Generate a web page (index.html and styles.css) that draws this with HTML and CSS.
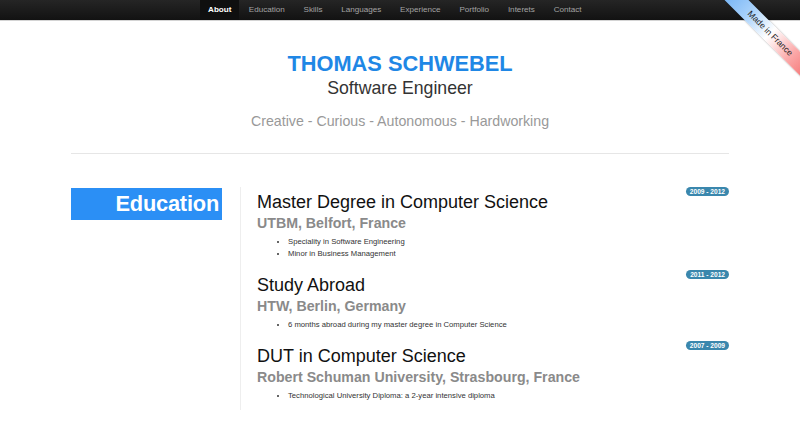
FILE: index.html
```html
<!DOCTYPE html>
<html lang="en">
<head>
<meta charset="utf-8">
<title>Thomas Schwebel</title>
<link rel="stylesheet" href="styles.css">
</head>
<body>
<nav class="navbar">
  <ul class="nav">
    <li class="active"><a href="#">About</a></li>
    <li><a href="#">Education</a></li>
    <li><a href="#">Skills</a></li>
    <li><a href="#">Languages</a></li>
    <li><a href="#">Experience</a></li>
    <li><a href="#">Portfolio</a></li>
    <li><a href="#">Interets</a></li>
    <li><a href="#">Contact</a></li>
  </ul>
</nav>
<div class="ribbon-wrap"><div class="ribbon">Made in France</div></div>

<header class="hero">
  <h1 class="name">THOMAS SCHWEBEL</h1>
  <h2 class="job">Software Engineer</h2>
  <p class="tagline">Creative - Curious - Autonomous - Hardworking</p>
</header>

<div class="container">
  <hr class="sep">
  <section class="section">
    <div class="section-label"><h2>Education</h2></div>
    <div class="section-body">
      <div class="entry">
        <span class="badge">2009 - 2012</span>
        <h3>Master Degree in Computer Science</h3>
        <h4>UTBM, Belfort, France</h4>
        <ul>
          <li>Speciality in Software Engineering</li>
          <li>Minor in Business Management</li>
        </ul>
      </div>
      <div class="entry">
        <span class="badge">2011 - 2012</span>
        <h3>Study Abroad</h3>
        <h4>HTW, Berlin, Germany</h4>
        <ul>
          <li>6 months abroad during my master degree in Computer Science</li>
        </ul>
      </div>
      <div class="entry">
        <span class="badge">2007 - 2009</span>
        <h3>DUT in Computer Science</h3>
        <h4>Robert Schuman University, Strasbourg, France</h4>
        <ul>
          <li>Technological University Diploma: a 2-year intensive diploma</li>
        </ul>
      </div>
    </div>
  </section>
</div>
</body>
</html>
```

FILE: styles.css
```css
* { box-sizing: border-box; }
html, body { margin: 0; padding: 0; }
body {
  font-family: "Liberation Sans", Arial, Helvetica, sans-serif;
  background: #fff;
  color: #333;
  overflow: hidden;
}

.navbar {
  height: 21px;
  background: linear-gradient(#252525, #121212);
  border-bottom: 1px solid #d4d4d4;
  display: flex;
  justify-content: center;
}
.nav {
  list-style: none;
  margin: 0;
  padding: 0 9px 0 0;
  display: flex;
  height: 20px;
}
.nav li { display: flex; }
.nav a {
  display: block;
  padding: 0 9.4px;
  line-height: 20px;
  font-size: 8.1px;
  color: #a3a3a3;
  text-decoration: none;
}
.nav li.active a {
  background: #0f0f0f;
  color: #fff;
  font-weight: bold;
  padding: 0 8px 0 8px;
}

.ribbon-wrap {
  position: absolute;
  top: 0;
  right: 0;
  width: 110px;
  height: 110px;
  overflow: hidden;
  z-index: 5;
}
.ribbon {
  position: absolute;
  left: 5px;
  top: 24.5px;
  width: 150px;
  height: 17px;
  line-height: 17px;
  transform: rotate(45deg);
  background: linear-gradient(90deg, #5aa4f2 0%, #a6d0fa 30%, #ffffff 50%, #fbaaaa 70%, #f04c4c 100%);
  color: #1a1a1a;
  font-size: 8.6px;
  text-align: center;
  box-shadow: 0 0 2px rgba(0,0,0,0.35);
}

.hero {
  text-align: center;
  padding-top: 30px;
}
.name {
  margin: 0;
  font-size: 21.8px;
  line-height: 26px;
  font-weight: bold;
  color: #1f87e5;
}
.job {
  margin: 0;
  font-size: 17.7px;
  line-height: 22px;
  font-weight: normal;
  color: #333;
}
.tagline {
  margin: 12px 0 0;
  font-size: 14.2px;
  line-height: 20px;
  color: #999;
}

.container {
  width: 658px;
  margin: 0 auto;
}
.sep {
  margin: 22px 0 0;
  border: 0;
  border-top: 1px solid #e6e6e6;
  height: 0;
}
.section {
  display: flex;
  margin-top: 33px;
}
.section-label {
  width: 169px;
  flex: none;
}
.section-label h2 {
  margin: 1px 0 0;
  width: 151px;
  height: 32px;
  background: #2b8ff5;
  color: #fff;
  font-size: 21.8px;
  font-weight: bold;
  text-align: right;
  line-height: 32px;
  padding-right: 3px;
  letter-spacing: -0.2px;
}
.section-body {
  flex: 1;
  border-left: 1px solid #eeeeee;
  padding-left: 16px;
  height: 223px;
}
.entry { position: relative; }
.entry + .entry { margin-top: 10px; }
.badge {
  position: absolute;
  right: 0;
  top: 0;
  height: 9px;
  line-height: 9px;
  padding: 0 4px;
  border-radius: 5px;
  background: #3a87ad;
  color: #fff;
  font-size: 6.6px;
  font-weight: bold;
}
.entry h3 {
  margin: 0;
  padding-top: 4px;
  font-size: 18px;
  line-height: 22px;
  font-weight: normal;
  color: #111;
}
.entry h4 {
  margin: 0;
  font-size: 14.2px;
  line-height: 20px;
  font-weight: bold;
  color: #8a8a8a;
}
.entry ul {
  margin: 3px 0 0;
  padding-left: 31px;
  font-size: 7.7px;
  line-height: 12px;
  color: #333;
}
```
